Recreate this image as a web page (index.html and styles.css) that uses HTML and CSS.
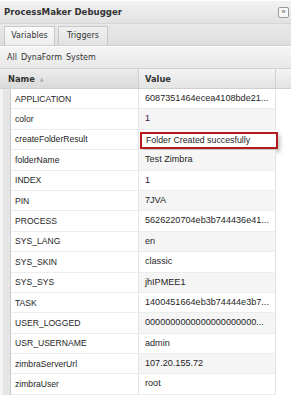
FILE: index.html
```html
<!DOCTYPE html>
<html lang="en">

<head>
    <meta charset="UTF-8">
    <meta name="viewport" content="width=device-width, initial-scale=1.0">
    <title>ProcessMaker Debugger</title>
    <link rel="stylesheet" href="styles.css">
</head>

<body>
    <!-- Debugger panel -->
    <div class="panel">
        <div class="title-bar">
            <span class="title">ProcessMaker Debugger</span>
            <span class="collapse-btn">&raquo;</span>
        </div>

        <!-- Tabs -->
        <div class="tabs">
            <div class="tab active">Variables</div>
            <div class="tab">Triggers</div>
        </div>

        <!-- Filter toolbar -->
        <div class="toolbar">
            <span>All</span>
            <span>DynaForm</span>
            <span>System</span>
        </div>

        <!-- Variables grid -->
        <div class="grid">
            <div class="grid-header">
                <div class="hd hd-name">Name <span class="sort">&#9650;</span></div>
                <div class="hd hd-value">Value</div>
                <div class="hd hd-rest"></div>
            </div>
            <div class="grid-body">
                <div class="row"><div class="numberer"></div><div class="c-name">APPLICATION</div><div class="c-value">6087351464ecea4108bde21...</div></div>
                <div class="row alt"><div class="numberer"></div><div class="c-name">color</div><div class="c-value num">1</div></div>
                <div class="row"><div class="numberer"></div><div class="c-name">createFolderResult</div><div class="c-value marked">Folder Created succesfully</div></div>
                <div class="row alt"><div class="numberer"></div><div class="c-name">folderName</div><div class="c-value">Test Zimbra</div></div>
                <div class="row"><div class="numberer"></div><div class="c-name">INDEX</div><div class="c-value num">1</div></div>
                <div class="row alt"><div class="numberer"></div><div class="c-name">PIN</div><div class="c-value">7JVA</div></div>
                <div class="row"><div class="numberer"></div><div class="c-name">PROCESS</div><div class="c-value">5626220704eb3b744436e41...</div></div>
                <div class="row alt"><div class="numberer"></div><div class="c-name">SYS_LANG</div><div class="c-value">en</div></div>
                <div class="row"><div class="numberer"></div><div class="c-name">SYS_SKIN</div><div class="c-value">classic</div></div>
                <div class="row alt"><div class="numberer"></div><div class="c-name">SYS_SYS</div><div class="c-value">jhIPMEE1</div></div>
                <div class="row"><div class="numberer"></div><div class="c-name">TASK</div><div class="c-value">1400451664eb3b74444e3b7...</div></div>
                <div class="row alt"><div class="numberer"></div><div class="c-name">USER_LOGGED</div><div class="c-value">0000000000000000000000...</div></div>
                <div class="row"><div class="numberer"></div><div class="c-name">USR_USERNAME</div><div class="c-value">admin</div></div>
                <div class="row alt"><div class="numberer"></div><div class="c-name">zimbraServerUrl</div><div class="c-value">107.20.155.72</div></div>
                <div class="row"><div class="numberer"></div><div class="c-name">zimbraUser</div><div class="c-value">root</div></div>
            </div>
        </div>
    </div>
</body>

</html>
```

FILE: styles.css
```css
/* Reset styling */
* {
    margin: 0;
    padding: 0;
    box-sizing: border-box;
}

body {
    background-color: #fff;
    font-family: "Liberation Sans", Arial, sans-serif;
    font-size: 8.6px;
    color: #1e1e1e;
}

.panel {
    width: 291px;
    height: 403px;
    overflow: hidden;
}

/* Title bar */
.title-bar {
    height: 24px;
    display: flex;
    align-items: center;
    justify-content: space-between;
    padding: 0 2px 0 4px;
    background: linear-gradient(#f2f2f2, #e2e2e2);
    border-top: 1px solid #fff;
    border-bottom: 1px solid #d6d6d6;
}

.title {
    font-family: "DejaVu Sans", Tahoma, sans-serif;
    font-weight: bold;
    font-size: 8.6px;
    color: #333;
}

.collapse-btn {
    width: 11px;
    height: 11px;
    border: 1px solid #999;
    border-radius: 2px;
    background: #fafafa;
    font-size: 8px;
    line-height: 8px;
    text-align: center;
    color: #555;
}

/* Tabs */
.tabs {
    height: 22px;
    display: flex;
    align-items: flex-end;
    gap: 3px;
    padding-left: 4px;
    background: linear-gradient(#e9e9e9, #dedede);
    border-bottom: 1px solid #cfcfcf;
}

.tab {
    width: 50px;
    height: 19px;
    padding-top: 4px;
    text-align: center;
    border: 1px solid #c8c8c8;
    border-bottom: none;
    background: linear-gradient(#f0f0f0, #e3e3e3);
    font-family: "DejaVu Sans", Tahoma, sans-serif;
    font-size: 8px;
    color: #333;
}

.tab.active {
    width: 51px;
    background: linear-gradient(#fafafa, #ededed);
}

/* Toolbar */
.toolbar {
    height: 23px;
    display: flex;
    align-items: center;
    gap: 4px;
    padding-left: 7px;
    background: linear-gradient(#f5f5f5, #e8e8e8);
    border-top: 1px solid #fff;
    border-bottom: 1px solid #d0d0d0;
    font-family: "DejaVu Sans", Tahoma, sans-serif;
    font-size: 8px;
    color: #333;
}

/* Grid */
.grid-header {
    display: flex;
    height: 20px;
    background: linear-gradient(#f4f4f4, #e3e3e3);
    border-bottom: 1px solid #d0d0d0;
}

.hd {
    display: flex;
    align-items: center;
    font-family: "DejaVu Sans", Tahoma, sans-serif;
    font-weight: bold;
    font-size: 8.3px;
    color: #333;
    border-right: 1px solid #d0d0d0;
}

.hd-name {
    width: 139px;
    padding-left: 8px;
    background: linear-gradient(#ececec, #dadada);
}

.sort {
    font-size: 5px;
    color: #aaa;
    margin-left: 5px;
}

.hd-value {
    width: 137px;
    padding-left: 6px;
}

.hd-rest {
    flex: 1;
    border-right: none;
}

.row {
    display: flex;
    height: 20.4px;
    background-color: #fff;
}

.numberer {
    width: 11px;
    background: #e6e6e6;
    border-left: 3px solid #f4f4f4;
    border-right: 1px solid #c9c9c9;
}

.c-name,
.c-value {
    display: flex;
    align-items: center;
    border-bottom: 1px solid #ededed;
}

.c-name {
    width: 128px;
    padding-left: 4px;
    border-right: 1px solid #e4e4e4;
}

.c-value {
    width: 137px;
    padding: 0 2px 0 6px;
    border-right: 1px solid #e4e4e4;
    white-space: nowrap;
    overflow: hidden;
    display: block;
    line-height: 19px;
    font-size: 9.1px;
}

.row.alt .c-value {
    background-color: #f5f5f5;
}

.c-value.num {
    color: #3d1442;
}

/* Highlighted value */
.c-value.marked {
    border: 2px solid #b31b1b;
    margin: 2px 0 1px 1px;
    width: 138px;
    line-height: 13px;
    padding-left: 4px;
    font-size: 8.8px;
    box-shadow: 2px 3px 4px rgba(0, 0, 0, 0.25);
    overflow: visible;
}
```
